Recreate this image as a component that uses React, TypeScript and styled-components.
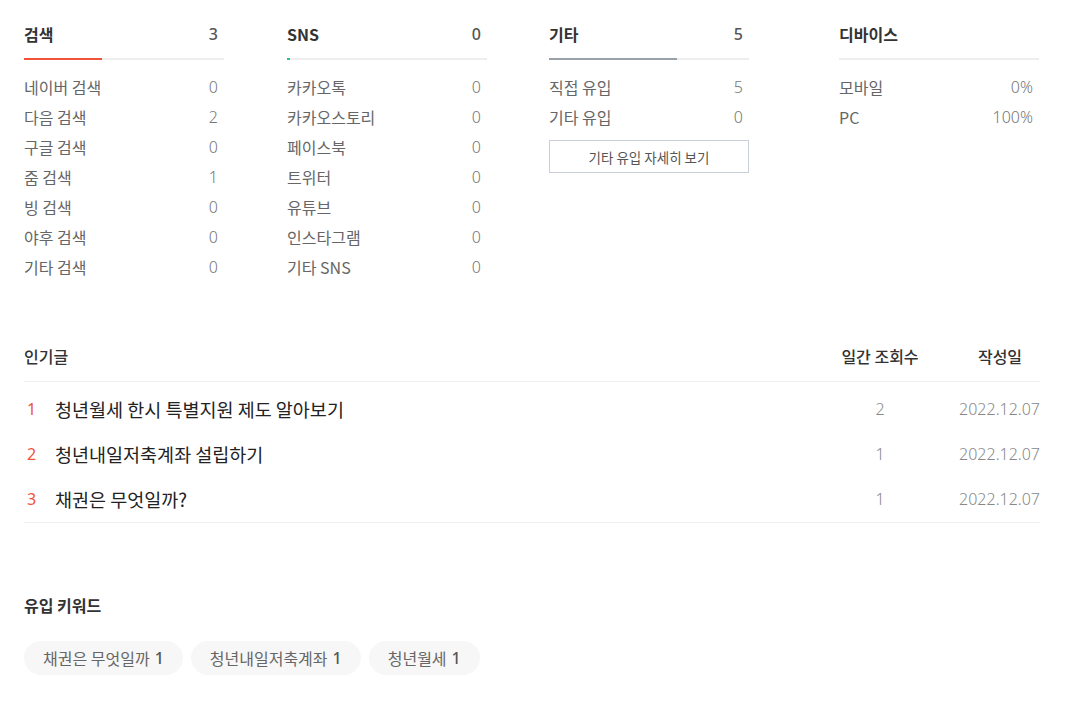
import React, { FC } from 'react'
import styled, { createGlobalStyle } from 'styled-components'

const GlobalStyle = createGlobalStyle`
  * { box-sizing: border-box; }
  body {
    margin: 0;
    background: #fff;
    font-family: 'Noto Sans CJK KR', 'Noto Sans', sans-serif;
    color: #333;
  }
`

interface StatItem {
  label: string
  value: string
}

interface StatGroup {
  title: string
  total?: number
  color?: string
  ratio?: number
  items: StatItem[]
  gap: number
  more?: string
}

const groups: StatGroup[] = [
  {
    title: '검색', total: 3, color: '#f0533a', ratio: 39, gap: 0,
    items: [
      { label: '네이버 검색', value: '0' },
      { label: '다음 검색', value: '2' },
      { label: '구글 검색', value: '0' },
      { label: '줌 검색', value: '1' },
      { label: '빙 검색', value: '0' },
      { label: '야후 검색', value: '0' },
      { label: '기타 검색', value: '0' },
    ],
  },
  {
    title: 'SNS', total: 0, color: '#27c39b', ratio: 1.5, gap: 63,
    items: [
      { label: '카카오톡', value: '0' },
      { label: '카카오스토리', value: '0' },
      { label: '페이스북', value: '0' },
      { label: '트위터', value: '0' },
      { label: '유튜브', value: '0' },
      { label: '인스타그램', value: '0' },
      { label: '기타 SNS', value: '0' },
    ],
  },
  {
    title: '기타', total: 5, color: '#9aa0a8', ratio: 64, gap: 62,
    items: [
      { label: '직접 유입', value: '5' },
      { label: '기타 유입', value: '0' },
    ],
    more: '기타 유입 자세히 보기',
  },
  {
    title: '디바이스', gap: 90,
    items: [
      { label: '모바일', value: '0%' },
      { label: 'PC', value: '100%' },
    ],
  },
]

const posts = [
  { rank: 1, title: '청년월세 한시 특별지원 제도 알아보기', views: 2, date: '2022.12.07' },
  { rank: 2, title: '청년내일저축계좌 설립하기', views: 1, date: '2022.12.07' },
  { rank: 3, title: '채권은 무엇일까?', views: 1, date: '2022.12.07' },
]

const keywords = [
  { word: '채권은 무엇일까', count: 1 },
  { word: '청년내일저축계좌', count: 1 },
  { word: '청년월세', count: 1 },
]

const App: FC = () => {
  return (
    <Page>
      <GlobalStyle />
      <StatsRow>
        {groups.map(g => (
          <Column key={g.title} offset={g.gap}>
            <ColumnHead>
              <HeadTitle>{g.title}</HeadTitle>
              {g.total !== undefined && <HeadCount>{g.total}</HeadCount>}
            </ColumnHead>
            <Bar>
              {g.ratio !== undefined && (
                <BarFill color={g.color!} style={{ width: `${g.ratio}%` }} />
              )}
            </Bar>
            <ItemList>
              {g.items.map(it => (
                <Item key={it.label}>
                  <span>{it.label}</span>
                  <ItemValue>{it.value}</ItemValue>
                </Item>
              ))}
            </ItemList>
            {g.more && <MoreButton>{g.more}</MoreButton>}
          </Column>
        ))}
      </StatsRow>

      <Popular>
        <PopularHead>
          <PopTitleCell>인기글</PopTitleCell>
          <ViewsCell>일간 조회수</ViewsCell>
          <DateHeadCell>작성일</DateHeadCell>
        </PopularHead>
        <PostList>
          {posts.map(p => (
            <PostRow key={p.rank}>
              <Rank>{p.rank}</Rank>
              <PostTitle>{p.title}</PostTitle>
              <PostViews>{p.views}</PostViews>
              <PostDate>{p.date}</PostDate>
            </PostRow>
          ))}
        </PostList>
      </Popular>

      <Keywords>
        <KeywordTitle>유입 키워드</KeywordTitle>
        <ChipRow>
          {keywords.map(k => (
            <Chip key={k.word}>
              {k.word} <ChipCount>{k.count}</ChipCount>
            </Chip>
          ))}
        </ChipRow>
      </Keywords>
    </Page>
  )
}

export default App

const Page = styled.div`
  width: 1070px;
  padding: 20px 30px 40px 24px;
`

const StatsRow = styled.div`
  display: flex;
  align-items: flex-start;
`

const Column = styled.div<{ offset: number }>`
  width: 200px;
  margin-left: ${p => p.offset}px;
  display: flex;
  flex-direction: column;
`

const ColumnHead = styled.div`
  display: flex;
  justify-content: space-between;
  align-items: center;
  height: 28px;
  padding-right: 6px;
`

const HeadTitle = styled.span`
  font-size: 16px;
  font-weight: 700;
  color: #333;
`

const HeadCount = styled.span`
  font-family: 'Noto Sans', sans-serif;
  font-size: 16px;
  font-weight: 500;
  color: #555;
`

const Bar = styled.div`
  margin-top: 10px;
  height: 2px;
  background: #eeeeee;
`

const BarFill = styled.div<{ color: string }>`
  height: 2px;
  background: ${p => p.color};
`

const ItemList = styled.ul`
  list-style: none;
  margin: 12px 0 0;
  padding: 0;
`

const Item = styled.li`
  display: flex;
  justify-content: space-between;
  align-items: center;
  height: 30px;
  padding-right: 6px;
  font-size: 16px;
  color: #666;
`

const ItemValue = styled.span`
  font-family: 'Noto Sans', sans-serif;
  font-weight: 300;
  color: #777;
`

const MoreButton = styled.button`
  margin-top: 8px;
  width: 200px;
  height: 33px;
  border: 1px solid #c8cfd9;
  background: #fff;
  font-family: 'Noto Sans CJK KR', sans-serif;
  font-size: 13.5px;
  color: #555;
  cursor: pointer;
`

const Popular = styled.section`
  margin-top: 49px;
  width: 1016px;
`

const PopularHead = styled.div`
  display: grid;
  grid-template-columns: 1fr 80px 120px;
  align-items: center;
  height: 51px;
  border-bottom: 1px solid #f0f0f2;
`

const PopTitleCell = styled.div`
  font-size: 16px;
  font-weight: 500;
  color: #333;
`

const ViewsCell = styled.div`
  text-align: center;
  white-space: nowrap;
  font-size: 16px;
  font-weight: 500;
  color: #333;
`

const DateHeadCell = styled.div`
  text-align: center;
  padding-left: 40px;
  font-size: 16px;
  font-weight: 500;
  color: #333;
`

const PostList = styled.div`
  padding: 4px 0 1px;
  border-bottom: 1px solid #f0f0f2;
`

const PostRow = styled.div`
  display: grid;
  grid-template-columns: 31px 1fr 80px 120px;
  align-items: center;
  height: 45px;
`

const Rank = styled.span`
  font-family: 'Noto Sans', sans-serif;
  font-size: 16px;
  color: #f0533a;
  padding-left: 3px;
`

const PostTitle = styled.span`
  font-size: 18.5px;
  color: #222;
`

const PostViews = styled.span`
  text-align: center;
  font-family: 'Noto Sans', sans-serif;
  font-weight: 300;
  font-size: 16px;
  color: #888;
`

const PostDate = styled.span`
  text-align: right;
  white-space: nowrap;
  font-family: 'Noto Sans', sans-serif;
  font-weight: 300;
  font-size: 16px;
  color: #888;
`

const Keywords = styled.section`
  margin-top: 70px;
`

const KeywordTitle = styled.h3`
  margin: 0;
  font-size: 16px;
  line-height: 24px;
  font-weight: 700;
  color: #333;
`

const ChipRow = styled.div`
  display: flex;
  gap: 8px;
  margin-top: 24px;
`

const Chip = styled.span`
  display: inline-flex;
  align-items: center;
  gap: 5px;
  height: 34px;
  padding: 0 19px;
  border-radius: 17px;
  background: #f7f7f7;
  font-size: 16px;
  color: #666;
`

const ChipCount = styled.span`
  font-family: 'Noto Sans', sans-serif;
  font-weight: 500;
  color: #555;
`
